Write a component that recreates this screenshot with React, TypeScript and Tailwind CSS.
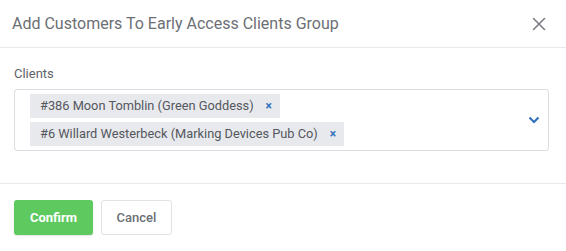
import React from 'react';

const tags = ['#386 Moon Tomblin (Green Goddess)', '#6 Willard Westerbeck (Marking Devices Pub Co)'];

export default function App() {
  return (
    <div className="w-[566px] h-[251px] bg-white font-['Roboto',sans-serif] text-[#6b6f76]">
      {/* Header */}
      <div className="flex items-center justify-between h-[48px] pl-[12px] pr-[20px] border-b border-[#e8e8ee]">
        <h2 className="text-[16px] text-[#6c6f75]">Add Customers To Early Access Clients Group</h2>
        <svg width="14" height="14" viewBox="0 0 14 14" className="text-[#7a7d83]">
          <path d="M1.5 1.5L12.5 12.5M12.5 1.5L1.5 12.5" stroke="currentColor" strokeWidth="1.6" strokeLinecap="round" />
        </svg>
      </div>

      {/* Body */}
      <div className="pl-[14px] pr-[17px] pt-[18px] pb-[32px] border-b border-[#e8e8ee]">
        <div className="text-[13px] leading-[15px] text-[#5f6368] mb-[8px]">Clients</div>
        <div className="flex items-center border border-[#dcdde3] rounded-[3px] pl-[15px] pr-[8px] py-[4px]">
          <div className="flex flex-col items-start gap-[4px] flex-1">
            {tags.map((t) => (
              <div key={t} className="flex items-center h-[24px] bg-[#e8e9ed] pl-[10px] pr-[8px] text-[12.8px] text-[#54575d]">
                <span>{t}</span>
                <span className="ml-[12px] text-[#2f6fbb] text-[12px] font-bold leading-none">×</span>
              </div>
            ))}
          </div>
          <svg width="12" height="8" viewBox="0 0 12 8" className="text-[#2f6fbb]">
            <path d="M1.5 1.5L6 6L10.5 1.5" stroke="currentColor" strokeWidth="2" fill="none" />
          </svg>
        </div>
      </div>

      {/* Footer */}
      <div className="flex gap-[8px] px-[14px] pt-[16px]">
        <button className="h-[35px] w-[79px] rounded-[3px] bg-[#5ec95f] text-white text-[13px] font-bold shadow-[0_1px_2px_rgba(0,0,0,0.12)]">
          Confirm
        </button>
        <button className="h-[35px] w-[71px] rounded-[3px] bg-white border border-[#e1e2e6] text-[#6b6f76] text-[13px] font-medium">
          Cancel
        </button>
      </div>
    </div>
  );
}
